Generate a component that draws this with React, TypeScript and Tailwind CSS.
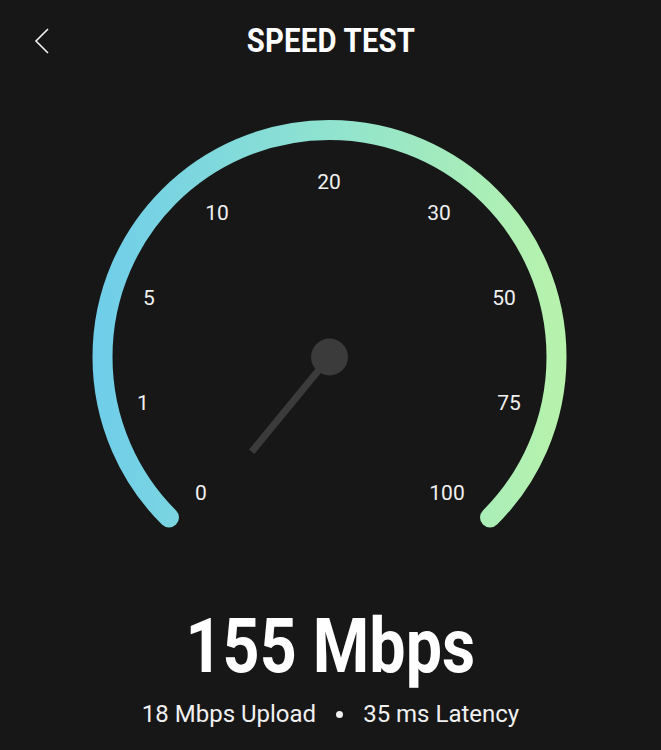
import React from 'react';

const labels = [
  { t: '0', x: 201, y: 492 },
  { t: '1', x: 143, y: 402.5 },
  { t: '5', x: 149, y: 297 },
  { t: '10', x: 217, y: 212.5 },
  { t: '20', x: 329, y: 181 },
  { t: '30', x: 439, y: 212.5 },
  { t: '50', x: 504, y: 297 },
  { t: '75', x: 509, y: 402 },
  { t: '100', x: 447, y: 492 },
];

function Gauge() {
  // svg starts at page y=80
  const cx = 329.5;
  const cy = 277;
  const r = 227;
  const d = r * Math.SQRT1_2;
  return (
    <svg width="661" height="528" viewBox="0 0 661 528" className="block">
      <defs>
        <linearGradient id="arc" gradientUnits="userSpaceOnUse" x1="92" y1="0" x2="566" y2="0">
          <stop offset="0" stopColor="#6fcdea" />
          <stop offset="0.5" stopColor="#8fe3cf" />
          <stop offset="1" stopColor="#b8f3ab" />
        </linearGradient>
      </defs>
      <path
        d={`M ${cx - d} ${cy + d} A ${r} ${r} 0 1 1 ${cx + d} ${cy + d}`}
        fill="none"
        stroke="url(#arc)"
        strokeWidth="20"
        strokeLinecap="round"
      />
      {labels.map((l) => (
        <text
          key={l.t}
          x={l.x}
          y={l.y - 80 + 7.5}
          textAnchor="middle"
          fill="#f0f0f0"
          fontSize="21"
          fontFamily="Roboto, 'Liberation Sans', sans-serif"
        >
          {l.t}
        </text>
      ))}
      <line x1={cx} y1={cy} x2="251.7" y2="371.7" stroke="#3b3b3b" strokeWidth="7" />
      <circle cx={cx} cy={cy} r="18.5" fill="#3b3b3b" />
    </svg>
  );
}

export default function App() {
  return (
    <div className="w-[661px] h-[750px] bg-[#171717] text-white overflow-hidden" style={{ fontFamily: "Roboto, 'Liberation Sans', sans-serif" }}>
      {/* Header */}
      <div className="relative h-[80px] flex justify-center pt-[23px]">
        <button className="absolute left-[33px] top-[26px] w-[18px] h-[30px]">
          <svg width="18" height="30" viewBox="0 0 18 30">
            <path d="M15 3 L3 15 L15 27" fill="none" stroke="#f2f2f2" strokeWidth="1.6" />
          </svg>
        </button>
        <h1 className="inline-block scale-x-[0.86] text-[34px] leading-none font-bold tracking-[0.3px]">SPEED TEST</h1>
      </div>

      <Gauge />

      {/* Result */}
      <div className="flex flex-col items-center">
        <div className="inline-block scale-x-[0.85] text-[76px] leading-none font-bold">155 Mbps</div>
        <div className="mt-[18px] flex items-center text-[24px] leading-none text-[#f0f0f0]">
          <span>18 Mbps Upload</span>
          <span className="mx-[20px] w-[7px] h-[7px] rounded-full bg-[#f0f0f0]"></span>
          <span>35 ms Latency</span>
        </div>
      </div>
    </div>
  );
}
